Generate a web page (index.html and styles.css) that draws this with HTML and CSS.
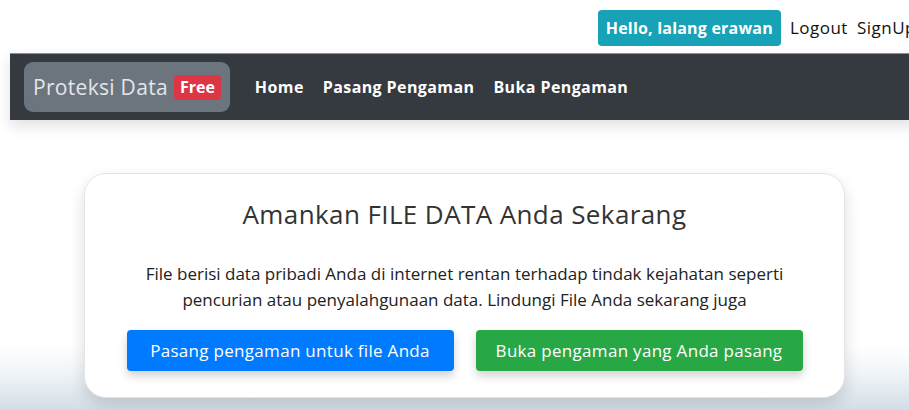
FILE: index.html
```html
<!DOCTYPE html>
<html lang="id">
<head>
<meta charset="utf-8">
<title>Proteksi Data</title>
<link rel="stylesheet" href="styles.css">
</head>
<body>
<div class="page">
  <header class="topbar">
    <span class="greeting">Hello, lalang erawan</span>
    <a class="toplink" href="#">Logout</a>
    <a class="toplink" href="#">SignUp</a>
  </header>
  <nav class="navbar">
    <a class="brand" href="#">Proteksi Data <span class="badge">Free</span></a>
    <a class="navlink" href="#">Home</a>
    <a class="navlink" href="#">Pasang Pengaman</a>
    <a class="navlink" href="#">Buka Pengaman</a>
  </nav>
  <main class="content">
    <section class="card">
      <h1 class="card-title">Amankan FILE DATA Anda Sekarang</h1>
      <p class="card-text">File berisi data pribadi Anda di internet rentan terhadap tindak kejahatan seperti pencurian atau penyalahgunaan data. Lindungi File Anda sekarang juga</p>
      <div class="actions">
        <a class="btn btn-blue" href="#">Pasang pengaman untuk file Anda</a>
        <a class="btn btn-green" href="#">Buka pengaman yang Anda pasang</a>
      </div>
    </section>
  </main>
</div>
</body>
</html>
```
FILE: styles.css
```css
html, body {
  margin: 0;
  padding: 0;
  overflow: hidden;
}
body {
  font-family: "Open Sans", Lato, sans-serif;
  color: #222;
  background: linear-gradient(to bottom, #ffffff 0, #ffffff 345px, #f1f5f8 372px, #d3dde6 410px);
  height: 410px;
}
.page {
  width: 906px;
  margin-left: 10px;
}
a { text-decoration: none; }

.topbar {
  display: flex;
  justify-content: flex-end;
  align-items: flex-start;
  height: 53px;
  box-sizing: border-box;
  padding-top: 10px;
  gap: 9px;
}
.greeting {
  background: #17a2b8;
  color: #fff;
  font-weight: 700;
  font-size: 16px;
  padding: 0 8px;
  height: 36px;
  line-height: 36px;
  border-radius: 4px;
  letter-spacing: 0.2px;
}
.toplink {
  color: #111;
  font-size: 17px;
  line-height: 36px;
  letter-spacing: 0.5px;
}

.navbar {
  background: #343a40;
  border-top: 1px solid #8a8f94;
  height: 66px;
  display: flex;
  align-items: center;
  padding-left: 14px;
  box-shadow: 0 6px 14px rgba(0, 0, 0, 0.12);
}
.brand {
  background: #6c757d;
  color: #e3e6e9;
  font-size: 21px;
  letter-spacing: 0.3px;
  height: 50px;
  display: flex;
  align-items: center;
  padding: 0 9px;
  border-radius: 9px;
  margin-right: 25px;
}
.badge {
  background: #dc3545;
  color: #fff;
  font-weight: 700;
  font-size: 16px;
  letter-spacing: 0;
  padding: 1px 6px 2px;
  border-radius: 4px;
  margin-left: 6px;
}
.navlink {
  color: #fff;
  font-weight: 700;
  font-size: 16px;
  margin-right: 19px;
  letter-spacing: 0.4px;
}

.content {
  padding-top: 53px;
  padding-left: 74px;
}
.card {
  width: 761px;
  height: 225px;
  box-sizing: border-box;
  border: 1px solid #e3e6e9;
  border-radius: 22px;
  background: #fff;
  box-shadow: 0 7px 16px rgba(0, 0, 0, 0.14);
  text-align: center;
  padding-top: 22px;
}
.card-title {
  margin: 0;
  font-weight: 400;
  font-size: 26px;
  letter-spacing: 0.4px;
  color: #333;
}
.card-text {
  margin: 29px auto 0;
  width: 670px;
  font-size: 17px;
  line-height: 26px;
  color: #222;
}
.actions {
  display: flex;
  justify-content: center;
  gap: 22px;
  margin-top: 17px;
}
.btn {
  width: 327px;
  height: 41px;
  line-height: 41px;
  border-radius: 4px;
  color: #fff;
  font-size: 17px;
  letter-spacing: 0.3px;
  box-shadow: 0 5px 10px rgba(0, 0, 0, 0.18);
}
.btn-blue { background: #007bff; }
.btn-green { background: #28a745; }
```
